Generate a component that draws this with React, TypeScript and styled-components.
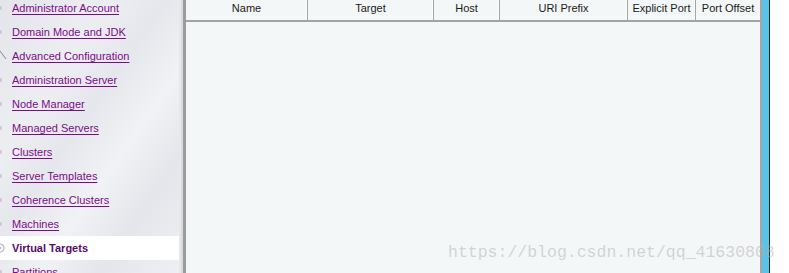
import styled, { createGlobalStyle } from 'styled-components';

const GlobalStyle = createGlobalStyle`
  html, body {
    margin: 0;
    padding: 0;
    background: #ffffff;
  }
`;

const StyledPage = styled.div`
  position: relative;
  width: 789px;
  height: 273px;
  overflow: hidden;

  display: flex;
  font-family: Tahoma, 'Liberation Sans', Arial, sans-serif;
`;

const StyledSidebar = styled.div`
  width: 179px;
  flex-shrink: 0;

  background: linear-gradient(
    125deg,
    #e4e5ea 0%,
    #eceef2 30%,
    #e6e7ec 45%,
    #f1f2f5 62%,
    #e5e6eb 78%,
    #eeeff2 100%
  );
`;

const StyledNavList = styled.ul`
  list-style: none;
  margin: -4px 0 0 0;
  padding: 0;
`;

const StyledNavItem = styled.li<{ $selected?: boolean }>`
  position: relative;
  height: 24px;

  display: flex;
  align-items: center;
  padding-left: 12px;

  background: ${(p) => (p.$selected ? '#ffffff' : 'transparent')};
`;

const StyledBullet = styled.span`
  position: absolute;
  left: -2px;
  top: 10px;
  width: 4px;
  height: 4px;
  border-radius: 50%;
  background: #c9c6d2;
`;

const StyledMarker = styled.svg`
  position: absolute;
  left: 0;
  top: 0;
`;

const StyledNavLink = styled.a<{ $selected?: boolean }>`
  font-size: 11px;
  color: ${(p) => (p.$selected ? '#5a0a6a' : '#7d0a8c')};
  font-weight: ${(p) => (p.$selected ? 700 : 400)};
  text-decoration: ${(p) => (p.$selected ? 'none' : 'underline')};
  text-underline-offset: 2px;
  white-space: nowrap;
  cursor: pointer;
`;

const StyledSplitter = styled.div`
  width: 7px;
  flex-shrink: 0;
  display: flex;

  & > span:nth-child(1) {
    width: 2px;
    background: #e7e8ec;
  }
  & > span:nth-child(2) {
    width: 2px;
    background: #d9dadf;
  }
  & > span:nth-child(3) {
    width: 3px;
    background: #9c9c9c;
  }
`;

const StyledMain = styled.div`
  width: 574px;
  flex-shrink: 0;
  background: #f4f7f8;
`;

const StyledHeaderRow = styled.div`
  display: flex;
  height: 20px;
  border-bottom: 2px solid #a3a3a3;
`;

const StyledHeaderCell = styled.div<{ $width: number }>`
  width: ${(p) => p.$width}px;
  box-sizing: border-box;
  flex-shrink: 0;

  display: flex;
  align-items: flex-start;
  justify-content: center;
  padding-top: 2px;

  border-right: 1px solid #a3a3a3;
  box-shadow: inset -1px 0 0 #ffffff;
  font-size: 11px;
  color: #1a1a1a;
  white-space: nowrap;

  &:last-child {
    border-right: none;
    box-shadow: none;
  }
`;

const StyledEdge = styled.div`
  width: 16px;
  flex-shrink: 0;
  display: flex;

  & > span:nth-child(1) {
    width: 2px;
    background: #a6a6a6;
  }
  & > span:nth-child(2) {
    width: 7px;
    background: #5ac3e8;
  }
  & > span:nth-child(3) {
    width: 1px;
    background: #2b2b2b;
  }
  & > span:nth-child(4) {
    flex: 1;
    background: #ffffff;
  }
`;

const StyledWatermark = styled.div`
  position: absolute;
  left: 448px;
  top: 243px;
  font-family: 'Liberation Mono', monospace;
  font-size: 16.5px;
  color: rgba(175, 175, 175, 0.5);
  white-space: nowrap;
  pointer-events: none;
`;

const navItems = [
  'Administrator Account',
  'Domain Mode and JDK',
  'Advanced Configuration',
  'Administration Server',
  'Node Manager',
  'Managed Servers',
  'Clusters',
  'Server Templates',
  'Coherence Clusters',
  'Machines',
  'Virtual Targets',
  'Partitions',
];

const columns = [
  { label: 'Name', width: 122 },
  { label: 'Target', width: 126 },
  { label: 'Host', width: 66 },
  { label: 'URI Prefix', width: 128 },
  { label: 'Explicit Port', width: 68 },
  { label: 'Port Offset', width: 64 },
];

const SELECTED = 'Virtual Targets';

export default function App() {
  return (
    <>
      <GlobalStyle />
      <StyledPage>
        <StyledSidebar>
          <StyledNavList>
            {navItems.map((item) => {
              const selected = item === SELECTED;
              return (
                <StyledNavItem key={item} $selected={selected}>
                  {selected ? (
                    <StyledMarker width="8" height="24" viewBox="0 0 8 24">
                      <circle cx="0" cy="12" r="4" fill="none" stroke="#b8a9c4" strokeWidth="1.2" />
                      <circle cx="0" cy="12" r="1.6" fill="#c9bdd3" />
                    </StyledMarker>
                  ) : item === 'Advanced Configuration' ? (
                    <StyledMarker width="8" height="24" viewBox="0 0 8 24">
                      <line x1="0" y1="7" x2="6" y2="15" stroke="#6c6c7a" strokeWidth="0.8" />
                    </StyledMarker>
                  ) : (
                    <StyledBullet />
                  )}
                  <StyledNavLink $selected={selected}>{item}</StyledNavLink>
                </StyledNavItem>
              );
            })}
          </StyledNavList>
        </StyledSidebar>
        <StyledSplitter>
          <span />
          <span />
          <span />
        </StyledSplitter>
        <StyledMain>
          <StyledHeaderRow>
            {columns.map((c) => (
              <StyledHeaderCell key={c.label} $width={c.width}>
                {c.label}
              </StyledHeaderCell>
            ))}
          </StyledHeaderRow>
        </StyledMain>
        <StyledEdge>
          <span />
          <span />
          <span />
          <span />
        </StyledEdge>
        <StyledWatermark>https://blog.csdn.net/qq_41630808</StyledWatermark>
      </StyledPage>
    </>
  );
}
